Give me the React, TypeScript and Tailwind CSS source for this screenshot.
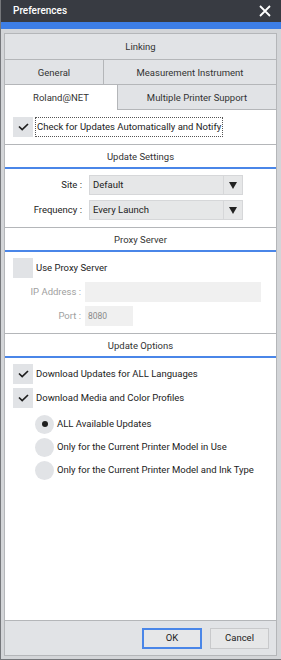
import React from "react";

const font = { fontFamily: 'Roboto, "Noto Sans", sans-serif' };

function Check({ checked }: { checked: boolean }) {
  return (
    <div className="w-[20px] h-[20px] bg-[#e1e3e6] flex items-center justify-center shrink-0">
      {checked && (
        <svg width="11" height="8" viewBox="0 0 11 8">
          <path d="M1 3.5 L4.2 6.6 L10 1" fill="none" stroke="#1e1e1e" strokeWidth="1.7" />
        </svg>
      )}
    </div>
  );
}

function Radio({ checked, label }: { checked: boolean; label: string }) {
  return (
    <div className="flex items-center h-[18px] pl-[30px]">
      <div className="w-[19px] h-[19px] rounded-full bg-[#e1e3e6] flex items-center justify-center shrink-0">
        {checked && <div className="w-[6px] h-[6px] rounded-full bg-[#1e1e1e]" />}
      </div>
      <span className="ml-[3px] text-[#222]">{label}</span>
    </div>
  );
}

function Header({ title }: { title: string }) {
  return (
    <div className="border-t border-[#b4b6b9] h-[25px] border-b-2 border-b-[#4a86e8] flex items-center justify-center pt-[1px] text-[#333]">
      {title}
    </div>
  );
}

function Select({ value }: { value: string }) {
  return (
    <div className="flex h-[20px] w-[154px] border border-[#d6d7d9] bg-[#e6e7e8]">
      <div className="flex-1 flex items-center pl-[3px] text-[#222]">{value}</div>
      <div className="w-[19px] border-l border-[#d6d7d9] flex items-center justify-center">
        <svg width="8" height="7" viewBox="0 0 8 7">
          <path d="M0 0 H8 L4 7 Z" fill="#222" />
        </svg>
      </div>
    </div>
  );
}

export default function App() {
  return (
    <div
      className="w-[281px] h-[660px] bg-[#d3d5d8] border-l border-b border-[#75777b] flex flex-col text-[9.5px] leading-none"
      style={font}
    >
      {/* title bar */}
      <div className="h-[22px] bg-[#383b42] flex items-center justify-between pl-[12px] pr-[10px] shrink-0">
        <span className="text-white text-[10px] font-medium">Preferences</span>
        <svg width="12" height="12" viewBox="0 0 12 12">
          <path d="M1 1 L11 11 M11 1 L1 11" stroke="#fff" strokeWidth="1.8" />
        </svg>
      </div>
      <div className="h-[7px] bg-[#3d7ee6] shrink-0" />

      <div className="flex-1 flex flex-col pl-[3px] pr-[4px] pt-[4px] pb-[3px]">
        <div className="flex-1 flex flex-col border border-[#b4b6b9] bg-white">
          {/* tabs */}
          <div className="h-[26px] bg-[#e1e3e6] border-b border-[#b4b6b9] flex items-center justify-center pt-[1px] text-[#333]">
            Linking
          </div>
          <div className="h-[25px] flex border-b border-[#b4b6b9] bg-[#e1e3e6] text-[#333]">
            <div className="w-[99px] border-r border-[#b4b6b9] flex items-center justify-center pt-[1px]">General</div>
            <div className="flex-1 flex items-center justify-center pt-[1px]">Measurement Instrument</div>
          </div>
          <div className="h-[25px] flex text-[#333]">
            <div className="w-[112px] bg-white flex items-center justify-center pt-[1px]">Roland@NET</div>
            <div className="flex-1 flex items-center justify-center pt-[1px] bg-[#e1e3e6] border-l border-b border-[#b4b6b9]">
              Multiple Printer Support
            </div>
          </div>

          {/* auto check */}
          <div className="h-[34px] flex items-center pl-[8px]">
            <Check checked />
            <span className="ml-[2px] px-[1px] py-[4px] border border-dotted border-[#555] text-[#222]">
              Check for Updates Automatically and Notify
            </span>
          </div>

          <Header title="Update Settings" />
          <div className="flex flex-col gap-[5px] pt-[6px] pb-[7px]">
            <div className="flex items-center">
              <span className="w-[80px] text-right text-[#222] pr-[3px]">Site :</span>
              <div className="ml-[4px]"><Select value="Default" /></div>
            </div>
            <div className="flex items-center">
              <span className="w-[80px] text-right text-[#222] pr-[3px]">Frequency :</span>
              <div className="ml-[4px]"><Select value="Every Launch" /></div>
            </div>
          </div>

          <Header title="Proxy Server" />
          <div className="flex flex-col pt-[6px] pb-[7px]">
            <div className="flex items-center pl-[8px]">
              <Check checked={false} />
              <span className="ml-[3px] text-[#222]">Use Proxy Server</span>
            </div>
            <div className="flex items-center mt-[4px]">
              <span className="w-[78px] text-right text-[#a0a0a0] pr-[2px]">IP Address :</span>
              <div className="ml-[2px] h-[20px] w-[176px] bg-[#f0f0f0]" />
            </div>
            <div className="flex items-center mt-[4px]">
              <span className="w-[78px] text-right text-[#a0a0a0] pr-[2px]">Port :</span>
              <div className="ml-[2px] h-[20px] w-[48px] bg-[#f0f0f0] flex items-center pl-[3px] text-[#8a8a8a] text-[8.5px]">
                8080
              </div>
            </div>
          </div>

          <Header title="Update Options" />
          <div className="flex flex-col pt-[6px]">
            <div className="flex items-center pl-[8px]">
              <Check checked />
              <span className="ml-[3px] text-[#222]">Download Updates for ALL Languages</span>
            </div>
            <div className="flex items-center pl-[8px] mt-[4px]">
              <Check checked />
              <span className="ml-[3px] text-[#222]">Download Media and Color Profiles</span>
            </div>
            <div className="flex flex-col gap-[5px] mt-[7px]">
              <Radio checked label="ALL Available Updates" />
              <Radio checked={false} label="Only for the Current Printer Model in Use" />
              <Radio checked={false} label="Only for the Current Printer Model and Ink Type" />
            </div>
          </div>
          <div className="flex-1" />

          {/* footer */}
          <div className="h-[35px] bg-[#e1e3e6] border-t border-[#b4b6b9] flex items-center justify-end gap-[8px] pr-[7px] shrink-0">
            <button className="w-[60px] h-[21px] border-2 border-[#4a86e8] bg-[#e6e7e8] text-[#222]">OK</button>
            <button className="w-[59px] h-[21px] border border-[#c8c9cb] bg-[#e6e7e8] text-[#222]">Cancel</button>
          </div>
        </div>
      </div>
    </div>
  );
}
